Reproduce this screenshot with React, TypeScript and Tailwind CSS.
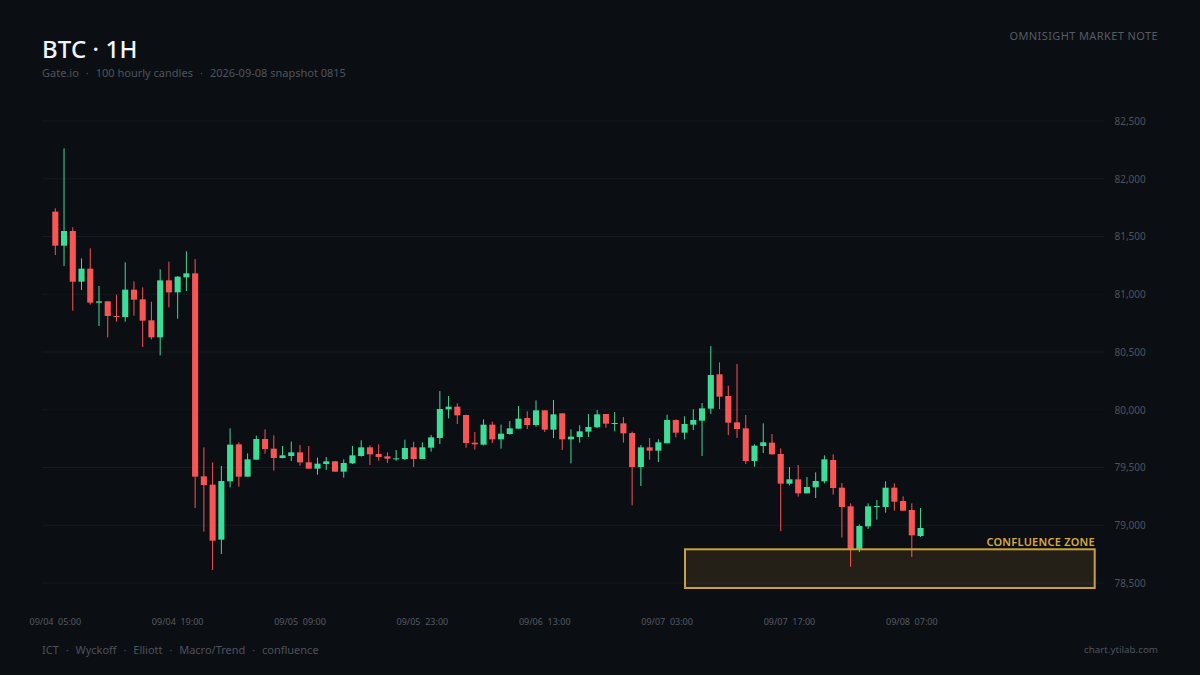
const X0 = 55.3;
const STEP = 8.74;
const GREEN = "#3ddc97";
const RED = "#f85555";

type C = [number, number, number, number, number];
// each row: colour flag (1 up, 0 down), wick top, body top, body bottom, wick bottom (price pixels × 3, relative to the segment origin)
const segments: { oy: number; c: C[] }[] = [
  {
    oy: 140,
    c: [
      [0, 205, 215, 317, 345],
      [1, 25, 273, 317, 378],
      [0, 262, 273, 425, 512],
      [1, 355, 386, 425, 450],
      [0, 325, 386, 488, 494],
      [1, 438, 484, 488, 558],
      [0, 484, 484, 528, 592],
      [0, 464, 528, 531, 545],
      [1, 367, 449, 531, 545],
      [0, 424, 449, 479, 527],
      [0, 442, 478, 542, 621],
      [0, 485, 541, 592, 598],
      [1, 388, 421, 592, 646],
      [0, 365, 421, 457, 502],
      [1, 408, 410, 457, 536],
      [1, 334, 400, 412, 453],
      [0, 357, 400, 1010, 1104],
    ],
  },
  {
    oy: 380,
    c: [
      [0, 202, 289, 315, 455],
      [0, 247, 314, 482, 570],
      [1, 258, 303, 479, 522],
      [1, 145, 194, 304, 322],
      [0, 187, 193, 290, 320],
      [1, 220, 238, 290, 290],
      [1, 167, 177, 239, 239],
      [0, 148, 177, 207, 221],
      [0, 166, 206, 234, 272],
      [1, 198, 226, 234, 235],
      [1, 185, 217, 228, 243],
      [0, 195, 217, 247, 257],
      [0, 198, 247, 266, 266],
      [1, 233, 251, 266, 284],
      [1, 231, 244, 252, 270],
      [0, 243, 244, 275, 275],
      [1, 238, 249, 275, 293],
      [1, 198, 226, 250, 252],
      [1, 181, 202, 228, 230],
      [0, 196, 202, 223, 255],
      [0, 193, 222, 231, 242],
      [0, 217, 229, 236, 249],
      [1, 210, 235, 236, 242],
      [1, 179, 204, 237, 240],
      [0, 185, 202, 237, 261],
      [1, 187, 202, 237, 237],
      [1, 165, 172, 203, 215],
      [1, 33, 87, 174, 192],
      [1, 48, 80, 88, 115],
      [0, 70, 80, 106, 132],
      [0, 104, 105, 189, 203],
      [0, 156, 188, 193, 209],
      [1, 118, 134, 194, 196],
      [0, 125, 134, 178, 189],
      [1, 134, 161, 178, 206],
      [1, 123, 145, 162, 164],
      [1, 78, 116, 146, 146],
      [0, 94, 114, 135, 147],
      [1, 61, 91, 135, 140],
      [0, 91, 91, 149, 156],
      [1, 60, 103, 149, 174],
      [0, 100, 100, 178, 210],
      [1, 148, 170, 178, 250],
      [1, 136, 154, 171, 188],
      [1, 102, 141, 155, 171],
      [1, 90, 103, 142, 143],
      [0, 102, 102, 131, 143],
      [1, 96, 129, 131, 154],
      [0, 111, 130, 160, 188],
      [0, 155, 159, 261, 376],
      [1, 195, 202, 261, 318],
    ],
  },
  {
    oy: 340,
    c: [
      [0, 294, 322, 332, 359],
      [1, 298, 307, 332, 366],
      [1, 224, 240, 310, 310],
      [0, 238, 240, 278, 292],
      [1, 229, 252, 278, 298],
      [1, 208, 240, 254, 270],
      [1, 189, 205, 242, 348],
      [1, 18, 105, 206, 222],
      [0, 67, 103, 170, 207],
      [0, 137, 168, 248, 285],
      [0, 72, 247, 267, 294],
      [0, 225, 265, 363, 372],
      [1, 313, 317, 363, 380],
      [1, 250, 307, 318, 339],
      [0, 282, 308, 343, 344],
    ],
  },
  {
    oy: 420,
    c: [
      [0, 85, 102, 191, 333],
      [1, 141, 178, 191, 196],
      [0, 135, 178, 220, 230],
      [1, 171, 201, 220, 220],
      [1, 157, 183, 202, 234],
      [1, 106, 118, 184, 190],
      [0, 103, 120, 204, 224],
      [0, 189, 203, 261, 353],
      [0, 250, 259, 388, 440],
      [1, 313, 318, 388, 396],
      [1, 250, 259, 319, 327],
      [1, 240, 258, 260, 299],
      [1, 184, 203, 261, 278],
      [0, 190, 203, 245, 272],
      [0, 229, 243, 272, 272],
      [0, 250, 270, 346, 411],
      [1, 264, 324, 348, 351],
    ],
  },
];

const candles = segments.flatMap((s) =>
  s.c.map(([up, wt, t, b, wb]) => ({
    up: up === 1,
    wt: s.oy + wt / 3,
    t: s.oy + t / 3,
    b: s.oy + b / 3,
    wb: s.oy + wb / 3,
  })),
);

const grid = [
  { y: 121, l: "82,500" },
  { y: 178.75, l: "82,000" },
  { y: 236.5, l: "81,500" },
  { y: 294.25, l: "81,000" },
  { y: 352, l: "80,500" },
  { y: 409.75, l: "80,000" },
  { y: 467.5, l: "79,500" },
  { y: 525.25, l: "79,000" },
  { y: 583, l: "78,500" },
];

const times = ["09/04 05:00", "09/04 19:00", "09/05 09:00", "09/05 23:00", "09/06 13:00", "09/07 03:00", "09/07 17:00", "09/08 07:00"];

const FONT = '"Noto Sans", "Noto Sans CJK KR", sans-serif';

function DotList({ items, className, gap }: { items: string[]; className: string; gap: string }) {
  return (
    <div className={className}>
      {items.map((t, i) => (
        <span key={t} className={gap}>
          {i > 0 && <span>·</span>}
          <span>{t}</span>
        </span>
      ))}
    </div>
  );
}

export default function App() {
  return (
    <div
      className="flex h-[675px] w-[1200px] flex-col overflow-hidden bg-[#0b0e13]"
      style={{ fontFamily: FONT }}
    >
      <header className="flex h-[100px] items-start justify-between pl-[42px] pr-[42px] pt-[33px]">
        <div className="flex flex-col">
          <h1 className="text-[24px] leading-[32px] font-medium tracking-[0.1px] text-[#f2f4f7]">BTC · 1H</h1>
          <DotList
            items={["Gate.io", "100 hourly candles", "2026-09-08 snapshot 0815"]}
            gap="flex gap-[7px]"
            className="mt-px flex gap-[7px] text-[11px] leading-[14px] text-[#4f545c]"
          />
        </div>
        <div className="-mt-[5px] text-[11px] leading-[16px] tracking-[0.4px] text-[#565b63]">OMNISIGHT MARKET NOTE</div>
      </header>

      <svg className="block h-[530px] w-[1200px] shrink-0" viewBox="0 100 1200 530" style={{ fontFamily: FONT }}>
        {grid.map((g) => (
          <g key={g.l}>
            <line x1={42} x2={1104} y1={g.y} y2={g.y} stroke="#161a20" strokeWidth={1} />
            <text x={1114.5} y={g.y + 3.9} fontSize={10} fill="#4f545c">
              {g.l}
            </text>
          </g>
        ))}
        {candles.map((c, i) => {
          const cx = X0 + i * STEP;
          const col = c.up ? GREEN : RED;
          return (
            <g key={i}>
              <line x1={cx} x2={cx} y1={c.wt} y2={c.wb} stroke={col} strokeWidth={1} />
              <rect x={cx - 3.05} y={c.t} width={6.1} height={Math.max(c.b - c.t, 1)} fill={col} />
            </g>
          );
        })}
        <rect x={685} y={549.3} width={409.7} height={38.7} fill="#e0a840" fillOpacity={0.12} stroke="#c9a03f" strokeWidth={2} />
        <text x={1095} y={546} textAnchor="end" fontSize={11} fontWeight={600} letterSpacing={0.25} fill="#d8aa42">
          CONFLUENCE ZONE
        </text>
        {times.map((t, i) => (
          <text key={t} x={X0 + i * 14 * STEP} y={624.5} textAnchor="middle" fontSize={9} fill="#565b63" xmlSpace="preserve">
            {t.replace(" ", "  ")}
          </text>
        ))}
      </svg>

      <footer className="flex flex-1 items-start justify-between pl-[42px] pr-[42px] pt-[12px]">
        <DotList
          items={["ICT", "Wyckoff", "Elliott", "Macro/Trend", "confluence"]}
          gap="flex gap-[6.85px]"
          className="flex gap-[6.85px] text-[11px] leading-[16px] text-[#4d525b]"
        />
        <div className="text-[9.8px] leading-[16px] text-[#4f545c]">chart.ytilab.com</div>
      </footer>
    </div>
  );
}
